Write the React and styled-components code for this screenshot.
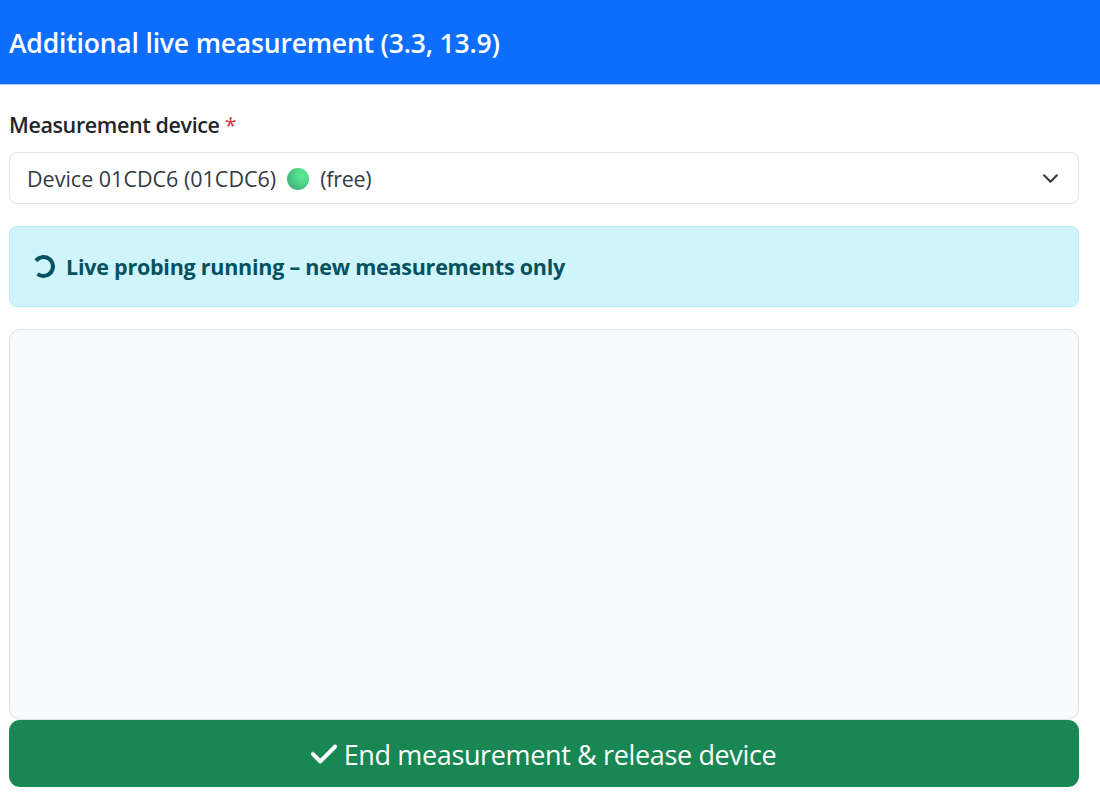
import React from "react";
import styled, { createGlobalStyle } from "styled-components";
import { FaCheck } from "react-icons/fa6";

const GlobalStyle = createGlobalStyle`
  * {
    box-sizing: border-box;
  }

  body {
    margin: 0;
    background: #ffffff;
    color: #212529;
    font-family: "Open Sans", "Noto Sans", sans-serif;
    font-size: 21.5px;
    line-height: 33px;
  }
`;

const Page = styled.div`
  display: flex;
  flex-direction: column;
  height: 794px;
  overflow: hidden;
`;

const Header = styled.header`
  display: flex;
  align-items: center;
  height: 85px;
  padding: 2px 9px 0;
  background: #0d6efd;
  border-bottom: 1px solid #a5caff;
`;

const Title = styled.h5`
  margin: 0;
  color: #ffffff;
  font-size: 26.5px;
  font-weight: 600;
  letter-spacing: -0.18px;
  white-space: nowrap;
`;

const Body = styled.main`
  display: flex;
  flex-direction: column;
  padding: 23px 21px 0 9px;
`;

const Label = styled.label`
  height: 33px;
  margin-bottom: 11px;
  font-weight: 600;
  letter-spacing: -0.38px;
  white-space: nowrap;
`;

const Required = styled.span`
  color: #dc3545;
  font-weight: 400;
`;

const Select = styled.div`
  display: flex;
  align-items: center;
  height: 52px;
  padding: 0 17px;
  border: 1px solid #e2e5e8;
  border-radius: 8px;
  color: #343a40;
`;

const SelectText = styled.span`
  letter-spacing: ${({ $spacing }) => $spacing || "normal"};
  white-space: nowrap;
`;

const StatusDot = styled.span`
  width: 22px;
  height: 22px;
  margin: 1px 11px 0;
  border-radius: 50%;
  background: radial-gradient(circle at 70% 35%, #5bea95 0%, #4fd889 35%, #45b87b 70%, #45977a 100%);
`;

const Chevron = styled.svg`
  width: 17px;
  height: 17px;
  margin-left: auto;
  margin-right: 2px;
`;

const Alert = styled.div`
  display: flex;
  align-items: center;
  height: 81px;
  margin-top: 22px;
  padding: 0 22px;
  background: #cff4fc;
  border: 1px solid #b3edf8;
  border-radius: 8px;
  color: #055160;
`;

const Spinner = styled.span`
  width: 23px;
  height: 23px;
  margin-right: 11px;
  border: 4px solid currentColor;
  border-left-color: transparent;
  border-radius: 50%;
  transform: rotate(-7deg);
`;

const AlertText = styled.strong`
  font-weight: 700;
  letter-spacing: -0.24px;
  white-space: nowrap;
`;

const Results = styled.div`
  height: 391px;
  margin-top: 22px;
  background: #f8f9fa;
  border: 1px solid #dee2e6;
  border-radius: 11px;
`;

const Button = styled.button`
  display: flex;
  align-items: center;
  justify-content: center;
  gap: 7px;
  height: 67px;
  padding: 1px 1px 0 0;
  border: none;
  border-radius: 11px;
  background: #198754;
  color: #ffffff;
  font-family: inherit;
  font-size: 27px;
  letter-spacing: -0.36px;
  white-space: nowrap;

  svg {
    width: 26px;
    height: 30px;
    stroke: #ffffff;
    stroke-width: 8px;
  }
`;

const App = () => {
  return (
    <>
      <GlobalStyle />
      <Page>
        <Header>
          <Title>Additional live measurement (3.3, 13.9)</Title>
        </Header>
        <Body>
          <Label>
            Measurement device <Required>*</Required>
          </Label>
          <Select>
            <SelectText>Device 01CDC6 (01CDC6)</SelectText>
            <StatusDot />
            <SelectText $spacing="-0.3px">(free)</SelectText>
            <Chevron viewBox="0 0 16 16" fill="none">
              <path
                d="m2 5 6 6 6-6"
                stroke="#343a40"
                strokeWidth="2"
                strokeLinecap="round"
                strokeLinejoin="round"
              />
            </Chevron>
          </Select>
          <Alert>
            <Spinner />
            <AlertText>Live probing running – new measurements only</AlertText>
          </Alert>
          <Results />
          <Button type="button">
            <FaCheck />
            <span>End measurement &amp; release device</span>
          </Button>
        </Body>
      </Page>
    </>
  );
};

export default App;
